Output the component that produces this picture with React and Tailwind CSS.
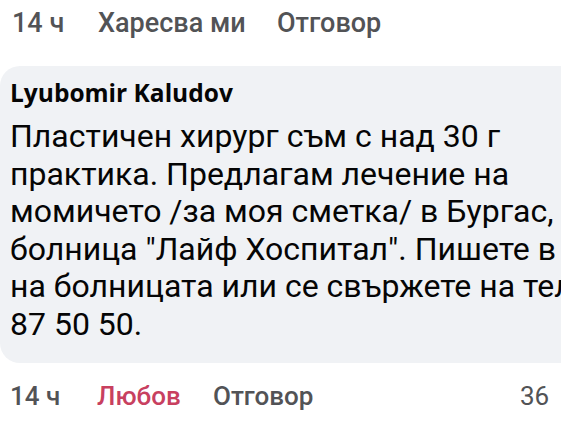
import React from "react";

const roboto = { fontFamily: "Roboto, 'Liberation Sans', sans-serif" };

const lines = [
  "Пластичен хирург съм с над 30 г",
  "практика. Предлагам лечение на",
  "момичето /за моя сметка/ в Бургас,",
  'болница "Лайф Хоспитал". Пишете в страницата',
  "на болницата или се свържете на тел. 0888",
  "87 50 50.",
];

export default function App() {
  return (
    <div className="w-[561px] h-[421px] overflow-hidden bg-white" style={roboto}>
      {/* Actions of the previous comment */}
      <div className="flex items-center h-[46px] pl-[12px] text-[27px] font-medium text-[#525356] whitespace-nowrap">
        <span className="w-[86px]">14 ч</span>
        <span className="w-[179px]">Харесва ми</span>
        <span>Отговор</span>
      </div>

      {/* Comment bubble */}
      <div className="mt-[20px] w-[600px] rounded-[20px] bg-[#f0f2f5] pl-[10px] pt-[12px] pb-[20px]">
        <div
          className="text-[24.5px] leading-[30px] font-bold text-[#050505] whitespace-nowrap"
          style={{ fontFamily: "'Open Sans', 'Liberation Sans', sans-serif" }}
        >
          Lyubomir Kaludov
        </div>
        <div className="mt-[10px] text-[32px] leading-[37.5px] text-[#050505] whitespace-nowrap">
          {lines.map((l, i) => (
            <div key={i}>{l}</div>
          ))}
        </div>
      </div>

      {/* Actions of this comment */}
      <div className="flex items-center h-[66px] pl-[10px] text-[26px] font-medium text-[#525356] whitespace-nowrap">
        <span className="w-[87px]">14 ч</span>
        <span className="w-[116px] text-[#c8405f]">Любов</span>
        <span className="w-[307px]">Отговор</span>
        <span className="font-normal">36</span>
      </div>
    </div>
  );
}
